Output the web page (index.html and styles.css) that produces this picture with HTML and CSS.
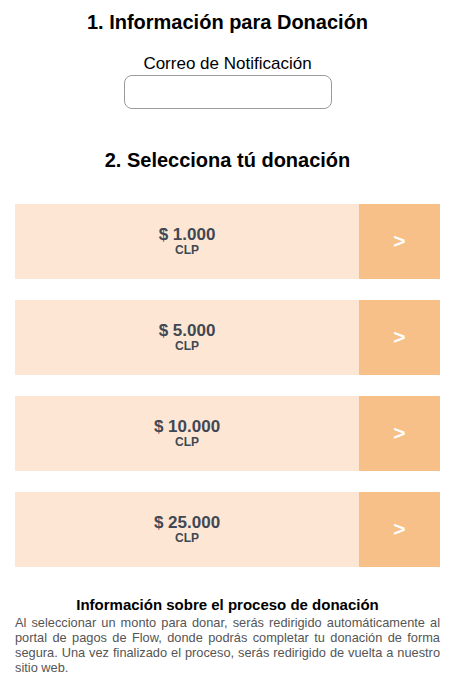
FILE: index.html
```html
<!DOCTYPE html>
<html lang="es">
<head>
    <meta charset="UTF-8">
    <meta name="viewport" content="width=device-width, initial-scale=1.0">
    <title>Donaciones</title>
    <link rel="stylesheet" href="styles.css">
</head>
<body>

    <main class="page">
        <section class="info-section">
            <h2 class="section-title">1. Información para Donación</h2>
            <label class="field-label" for="email">Correo de Notificación</label>
            <input type="email" id="email" name="email" class="input-custom">
        </section>

        <section class="donation-section">
            <h2 class="section-title select-title">2. Selecciona tú donación</h2>
            <div class="donation-list">
                <button class="donation-card">
                    <span class="amount-box">
                        <span class="amount">$ 1.000</span>
                        <span class="currency">CLP</span>
                    </span>
                    <span class="arrow-box">&gt;</span>
                </button>
                <button class="donation-card">
                    <span class="amount-box">
                        <span class="amount">$ 5.000</span>
                        <span class="currency">CLP</span>
                    </span>
                    <span class="arrow-box">&gt;</span>
                </button>
                <button class="donation-card">
                    <span class="amount-box">
                        <span class="amount">$ 10.000</span>
                        <span class="currency">CLP</span>
                    </span>
                    <span class="arrow-box">&gt;</span>
                </button>
                <button class="donation-card">
                    <span class="amount-box">
                        <span class="amount">$ 25.000</span>
                        <span class="currency">CLP</span>
                    </span>
                    <span class="arrow-box">&gt;</span>
                </button>
            </div>
        </section>

        <section class="process-info">
            <h3>Información sobre el proceso de donación</h3>
            <p>Al seleccionar un monto para donar, serás redirigido automáticamente al portal de pagos de Flow, donde podrás completar tu donación de forma segura. Una vez finalizado el proceso, serás redirigido de vuelta a nuestro sitio web.</p>
        </section>
    </main>

</body>
</html>
```

FILE: styles.css
```css
body {
    font-family: "Liberation Sans", Arial, sans-serif;
    background-color: #fff;
    color: #000;
    margin: 0;
}

.page {
    padding: 0 17px 0 15px;
}

.info-section {
    display: flex;
    flex-direction: column;
    align-items: center;
}

.section-title {
    font-size: 20px;
    line-height: 23px;
    font-weight: bold;
    text-align: center;
    margin: 11px 0 0;
}

.field-label {
    display: block;
    font-size: 17px;
    line-height: 20px;
    margin-top: 20px;
}

.input-custom {
    box-sizing: border-box;
    width: 208px;
    height: 34px;
    margin-top: 1px;
    border: 1px solid #9a9a9a;
    border-radius: 8px;
    padding: 4px 8px;
    font-size: 14px;
}

.select-title {
    margin-top: 40px;
}

.donation-list {
    display: flex;
    flex-direction: column;
    gap: 21px;
    margin-top: 32px;
}

.donation-card {
    display: flex;
    height: 75px;
    width: 100%;
    padding: 0;
    border: none;
    background-color: #fee6d5;
    font-family: inherit;
    cursor: pointer;
}

.amount-box {
    flex: 1;
    display: flex;
    flex-direction: column;
    justify-content: center;
    align-items: center;
    color: #3f4853;
    font-weight: bold;
}

.amount {
    font-size: 17px;
    line-height: 18px;
}

.currency {
    font-size: 12px;
    line-height: 13px;
}

.arrow-box {
    width: 81px;
    display: flex;
    justify-content: center;
    align-items: center;
    background-color: #f7c088;
    color: #fff;
    font-size: 21px;
    font-weight: bold;
    padding-bottom: 2px;
    box-sizing: border-box;
}

.process-info {
    margin-top: 29px;
}

.process-info h3 {
    font-size: 15px;
    line-height: 17px;
    text-align: center;
    margin: 0;
}

.process-info p {
    font-size: 12.8px;
    line-height: 15px;
    color: #555;
    text-align: justify;
    margin: 2px 0 0;
}
```
